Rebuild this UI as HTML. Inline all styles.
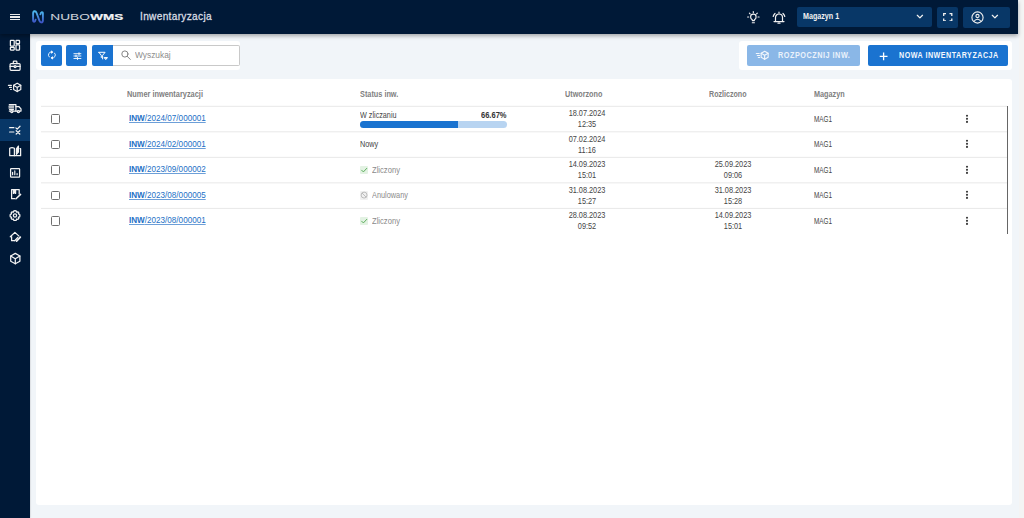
<!DOCTYPE html>
<html><head><meta charset="utf-8">
<style>
*{box-sizing:border-box;margin:0;padding:0}
html,body{width:1024px;height:518px;overflow:hidden}
body{position:relative;background:#f1f5f9;font-family:"Liberation Sans",sans-serif;color:#444}
.a{position:absolute}
#scroll{left:1018.5px;top:0;width:5.5px;height:518px;background:#f4f4f4}
#header{left:0;top:0;width:1018px;height:33.5px;background:#001937;box-shadow:0 1.5px 4px rgba(0,0,0,.32);z-index:3}
#side{left:0;top:34px;width:30px;height:484px;background:#001937;box-shadow:.5px 0 1.5px rgba(0,0,0,.2);z-index:2}
.card{background:#fff;border-radius:3px}
.btn{background:#1a73d0;border-radius:2px}
.t{white-space:nowrap;line-height:1}
.hd{font-size:8px;font-weight:bold;color:#808080;transform-origin:0 0}
.bd{font-size:8px;color:#454545;transform-origin:0 0}
.row{left:40px;width:967px;height:1px;background:#ebebeb}
.cb{left:50.8px;width:9.4px;height:9.8px;border:1.1px solid #6f6f6f;border-radius:1.5px}
.lnk{left:129px;font-size:8.1px;color:#2370c6;text-decoration:underline;text-decoration-color:#6d9fd8;text-decoration-thickness:.8px;text-underline-offset:1px;transform-origin:0 0}
.dots{left:966px;width:2.2px}
.dots i{display:block;width:2.2px;height:2.2px;background:#222;margin-bottom:1px;border-radius:.4px}
.dt{font-size:8px;color:#454545;text-align:center;width:60px;transform-origin:50% 0}
.mag{left:813.8px;font-size:8px;color:#454545;transform-origin:0 0}
</style></head><body>
<div id="scroll" class="a"></div>

<div id="header" class="a">
  <!-- hamburger -->
  <div class="a" style="left:10px;top:13.5px;width:10px;height:1.4px;background:#e8e8e8"></div>
  <div class="a" style="left:10px;top:16.3px;width:10px;height:1.4px;background:#e8e8e8"></div>
  <div class="a" style="left:10px;top:19.1px;width:10px;height:1.4px;background:#e8e8e8"></div>
  <!-- logo -->
  <svg class="a" style="left:29px;top:8px" width="18" height="18" viewBox="0 0 18 18">
    <defs><linearGradient id="lg" x1="0" y1="3" x2="0" y2="15" gradientUnits="userSpaceOnUse"><stop offset="0" stop-color="#4cbcef"/><stop offset="1" stop-color="#3d4fc4"/></linearGradient></defs>
    <path d="M6.6 11.6 C6.1 14.4 4.1 14.3 4.1 12.3 V5.6 C4.1 2.6 6.6 2.4 7.6 5 L10.4 12.6 C11.4 15.2 13.9 15 13.9 12.2 V5.6 C13.9 3.5 11.9 3.5 11.4 6.3" fill="none" stroke="url(#lg)" stroke-width="1.9" stroke-linecap="round" stroke-linejoin="round"/>
  </svg>
  <svg class="a" style="left:49.5px;top:12px" width="75" height="9" viewBox="0 0 75 9">
    <text x="0.3" y="7.75" font-family="Liberation Sans" font-size="8.2" fill="#cdd2d9" stroke="#cdd2d9" stroke-width=".05" textLength="39.5" lengthAdjust="spacingAndGlyphs">NUBO</text>
    <text x="40.2" y="7.75" font-family="Liberation Sans" font-weight="bold" font-size="8.2" fill="#f2f3f5" stroke="#f2f3f5" stroke-width=".2" textLength="33" lengthAdjust="spacingAndGlyphs">WMS</text>
  </svg>
  <div class="a t" style="left:140px;top:11.3px;font-size:11.2px;letter-spacing:.35px;color:#d9dee4;-webkit-text-stroke:.3px #d9dee4;transform:scaleX(.905);transform-origin:0 0">Inwentaryzacja</div>

  <!-- light bulb -->
  <svg class="a" style="left:747px;top:10.5px" width="13" height="13" viewBox="0 0 13 13" fill="none" stroke="#f0f0f0" stroke-width="1.15" stroke-linecap="round" stroke-linejoin="round">
    <path d="M5.3 9.6 V8.7 C4.3 8.1 3.6 7.1 3.6 5.9 a2.75 2.75 0 0 1 5.5 0 c0 1.2 -.7 2.2 -1.7 2.8 V9.6 z"/>
    <path d="M5.3 11.7 h2.1"/>
    <path d="M6.35 .6 v1.1"/><path d="M2.4 2.1 l.7 .7"/><path d="M10.3 2.1 l-.7 .7"/><path d="M.6 6 h1.1"/><path d="M11 6 h1.1"/>
  </svg>
  <!-- alarm bell -->
  <svg class="a" style="left:772px;top:10.5px" width="14" height="13" viewBox="0 0 14 13" fill="none" stroke="#f0f0f0" stroke-width="1.2" stroke-linecap="round">
    <path d="M3.5 10.5 V6.5 a3.5 3.5 0 0 1 7 0 V10.5"/>
    <path d="M2 10.6 h10"/><path d="M6 12.2 h2"/><path d="M7 1 v1"/>
    <path d="M1.2 5.5 a6 6 0 0 1 1.8 -3"/><path d="M12.8 5.5 a6 6 0 0 0 -1.8 -3"/>
  </svg>
  <!-- dropdown -->
  <div class="a" style="left:797px;top:7px;width:135px;height:20.3px;background:#083767;border-radius:2px"></div>
  <div class="a t" style="left:802.8px;top:11.9px;font-size:8.5px;font-weight:bold;color:#f2f2f2;transform:scaleX(.84);transform-origin:0 0">Magazyn 1</div>
  <svg class="a" style="left:916px;top:14.3px" width="8" height="6" viewBox="0 0 8 6"><path d="M1.3 1.3 L3.9 3.9 L6.5 1.3" fill="none" stroke="#f0f0f0" stroke-width="1.25" stroke-linecap="round" stroke-linejoin="round"/></svg>
  <!-- fullscreen -->
  <div class="a" style="left:937px;top:6.5px;width:21px;height:21px;background:#083767;border-radius:2px"></div>
  <svg class="a" style="left:943px;top:12.8px" width="9.5" height="8.5" viewBox="0 0 9.5 8.5" fill="none" stroke="#f0f0f0" stroke-width="1.3">
    <path d="M.7 3 V.7 H3"/><path d="M6.5 .7 H8.8 V3"/><path d="M8.8 5.5 V7.8 H6.5"/><path d="M3 7.8 H.7 V5.5"/>
  </svg>
  <!-- user -->
  <div class="a" style="left:963px;top:6.5px;width:47px;height:21px;background:#083767;border-radius:2px"></div>
  <svg class="a" style="left:971px;top:10.8px" width="13" height="13" viewBox="0 0 13 13" fill="none" stroke="#f0f0f0" stroke-width="1.1">
    <circle cx="6.5" cy="6.5" r="5.6"/><circle cx="6.5" cy="5" r="1.6"/><path d="M3 10.6 c.8 -1.6 2 -2.4 3.5 -2.4 s2.7 .8 3.5 2.4"/>
  </svg>
  <svg class="a" style="left:991.3px;top:14.3px" width="8" height="6" viewBox="0 0 8 6"><path d="M1.3 1.3 L3.9 3.9 L6.5 1.3" fill="none" stroke="#f0f0f0" stroke-width="1.25" stroke-linecap="round" stroke-linejoin="round"/></svg>
</div>

<div id="side" class="a">
  <div class="a" style="left:0;top:85px;width:30px;height:22px;background:#083767"></div>
  <svg class="a" style="left:0;top:0" width="30" height="240" viewBox="0 0 30 240" fill="none" stroke="#f2f2f2" stroke-width="1.25" stroke-linejoin="round" stroke-linecap="round"><g transform="translate(0,-0.5)">
    <!-- dashboard: y 40-50 => local 6.5-16.5 -->
    <rect x="10.4" y="6.9" width="3.8" height="5.6" rx=".4"/>
    <rect x="16" y="6.9" width="3.5" height="3.2" rx=".4"/>
    <rect x="10.4" y="13.9" width="3.8" height="2.6" rx=".4"/>
    <rect x="16" y="11.4" width="3.5" height="5.1" rx=".4"/>
    <!-- briefcase y 61-70.6 => 27.5-37.1 -->
    <rect x="10.1" y="30" width="10" height="6.8" rx="1"/>
    <path d="M13.3 30 V28.5 a.8 .8 0 0 1 .8 -.8 h2 a.8 .8 0 0 1 .8 .8 V30"/>
    <path d="M10.1 32.9 h3.6 M16.5 32.9 h3.6"/>
    <circle cx="15.1" cy="33" r="1"/>
    <!-- fast cube y 82.8-92 => 49.3-58.5 -->
    <path d="M8.4 51.9 h3 M9.5 53.9 h1.9 M10.6 56 h.8" stroke-width="1.1"/>
    <path d="M17.2 49.7 L20.8 51.8 V56 L17.2 58.1 L13.6 56 V51.8 Z" stroke-width="1.15"/>
    <path d="M13.6 51.8 L17.2 53.9 L20.8 51.8 M17.2 53.9 V58.1" stroke-width="1.15"/>
    <!-- truck y 103.7-112.6 => 70.2-79.1 -->
    <path d="M9.3 71 h6.6 v6.6 h-6.6"/>
    <path d="M9 72.7 h4.6 M9 74.4 h4.6 M9.5 76 h4"/>
    <path d="M15.9 73 h2.9 l2.2 2.4 v2.2 h-5.1"/>
    <circle cx="11.8" cy="78.1" r="1.1" fill="#001937"/>
    <circle cx="18.4" cy="78.1" r="1.1" fill="#001937"/>
    <!-- list check y 126-134 => 92.5-100.5 -->
    <path d="M9.6 94.2 h4.3 M9.6 98.5 h4.3" stroke-width="1.2"/>
    <path d="M15.9 94.4 l1.3 1.2 l2.8 -2.9"/>
    <path d="M16.2 97.2 l3.6 3.3 M19.8 97.2 l-3.6 3.3"/>
    <!-- book y 145.5-156 => 112-122.5 -->
    <path d="M9.7 122.2 V114.8 Q12 113.6 14.4 114.8 V122.2 Z"/>
    <path d="M14.4 122.2 H20.6 V115.2 H20"/>
    <path d="M16.4 120.8 V115.4 L18.4 112.6 V118.6 Z" fill="#f2f2f2"/>
    <!-- chart y 168.2-177.4 => 134.7-143.9 -->
    <rect x="10.6" y="135.1" width="9" height="8.6" rx=".6"/>
    <path d="M12.6 141.2 v-2.4 M14.8 141.2 v-3.8 M17.1 141.2 v-1.2" stroke-width="1.2"/>
    <!-- doc pen y 189-199 => 155.5-165.5 -->
    <path d="M19.2 160.6 V156 H11.6 V165.2 H14.8"/>
    <path d="M13.4 156 V159.9 L14.5 159 L15.6 159.9 V156 Z" fill="#f2f2f2"/>
    <path d="M16 165.2 L20.6 160.9" stroke-width="1.5"/>
    <!-- gear y 210.4-220.6 => 176.9-187.1 -->
    <path d="M15 177.2 l1.2 .2 .4 1.3 1.3 -.4 .9 .9 -.4 1.3 1.3 .4 .2 1.2 -.2 1.2 -1.3 .4 .4 1.3 -.9 .9 -1.3 -.4 -.4 1.3 -1.2 .2 -1.2 -.2 -.4 -1.3 -1.3 .4 -.9 -.9 .4 -1.3 -1.3 -.4 -.2 -1.2 .2 -1.2 1.3 -.4 -.4 -1.3 .9 -.9 1.3 .4 .4 -1.3 z"/>
    <circle cx="15" cy="182" r="1.6"/>
    <!-- tag home y 232-241.6 => 198.5-208.1 -->
    <path d="M10.3 203.3 L14.9 198.9 L19 202.6"/>
    <path d="M11.6 203.2 V207.2 H14.7"/>
    <path d="M20.4 203.6 L16.6 207.6" stroke-width="1.6"/>
    <path d="M14.7 207.2 L17.8 204"/>
    <!-- cube y 253-263.8 => 219.5-230.3 -->
    <path d="M15.3 219.9 l4.6 2.6 v5.2 l-4.6 2.6 l-4.6 -2.6 v-5.2 z"/>
    <path d="M10.7 222.5 l4.6 2.7 l4.6 -2.7 M15.3 225.2 v5.1"/>
  </g></svg>
</div>

<!-- left toolbar -->
<div class="a card" style="left:36px;top:41px;width:204px;height:29px"></div>
<div class="a btn" style="left:41px;top:45px;width:21px;height:21px"></div>
<div class="a btn" style="left:66px;top:45px;width:21px;height:21px"></div>
<div class="a btn" style="left:92px;top:45px;width:22px;height:21px;border-radius:2px 0 0 2px"></div>
<div class="a" style="left:113px;top:45px;width:127px;height:21px;border:1px solid #c9c9c9;border-left:none;border-radius:0 2px 2px 0;background:#fff"></div>
<div class="a t" style="left:134.6px;top:50.6px;font-size:8.8px;color:#8c8c8c;transform:scaleX(.95);transform-origin:0 0">Wyszukaj</div>

<!-- toolbar icons -->
<svg class="a" style="left:46.5px;top:50.4px" width="10" height="10" viewBox="0 0 10 10" fill="none" stroke="#fff" stroke-width=".9" stroke-linecap="round" stroke-linejoin="round">
  <path d="M2.3 7 A2.9 2.9 0 0 1 5 2.1"/><path d="M7.6 3.1 A2.9 2.9 0 0 1 4.9 7.9"/>
  <path d="M4.7 1.2 L5.8 2.1 L4.7 3 z" fill="#fff"/><path d="M5.2 7 L4.1 7.9 L5.2 8.8 z" fill="#fff"/>
</svg>
<svg class="a" style="left:72.5px;top:51.5px" width="9" height="8" viewBox="0 0 9 8" fill="none" stroke="#fff" stroke-width=".9">
  <path d="M.5 1.7 h7.8 M.5 4 h7.8 M.5 6.5 h7.8"/><path d="M6 .4 v2.6 M3 2.7 v2.6 M4.5 5.2 v2.6" stroke-width="1"/>
</svg>
<svg class="a" style="left:97.5px;top:50.5px" width="10" height="9" viewBox="0 0 10 9" fill="none" stroke="#fff" stroke-width="1" stroke-linejoin="round" stroke-linecap="round">
  <path d="M.8 1.3 h6.3 l-2.5 3 v3.6 M.8 1.3 l2.5 3 v2.2"/>
  <path d="M6.5 6.6 h3 l-1.5 1.7 z" fill="#fff"/>
</svg>
<svg class="a" style="left:120.5px;top:50px" width="10.5" height="10.5" viewBox="0 0 10.5 10.5" fill="none" stroke="#858585" stroke-width="1" stroke-linecap="round">
  <circle cx="3.9" cy="4" r="3.1"/><path d="M6.2 6.3 L9.3 9.4"/>
</svg>
<!-- right toolbar -->
<div class="a card" style="left:739px;top:41px;width:273px;height:29px"></div>
<div class="a btn" style="left:747px;top:45px;width:113px;height:21px;background:#8ab7e7"></div>
<div class="a btn" style="left:868px;top:45px;width:140px;height:21px"></div>
<div class="a t" style="left:778px;top:51.2px;font-size:8.3px;font-weight:bold;color:#eaf2fb;letter-spacing:.6px;transform:scaleX(.875);transform-origin:0 0">ROZPOCZNIJ INW.</div>
<div class="a t" style="left:898.8px;top:51.1px;font-size:8.3px;font-weight:bold;color:#f4f8fd;letter-spacing:.6px;transform:scaleX(.858);transform-origin:0 0">NOWA INWENTARYZACJA</div>

<svg class="a" style="left:755px;top:50px" width="15" height="12" viewBox="0 0 15 12" fill="none" stroke="#f3f7fc" stroke-width="1.1" stroke-linecap="round" stroke-linejoin="round">
  <path d="M1.3 3.5 h2.9 M2.3 5.5 h2.3 M3.3 7.5 h1.4"/>
  <path d="M9.65 1.35 L13.15 3.35 V7.35 L9.65 9.35 L6.15 7.35 V3.35 Z"/><path d="M6.15 3.35 L9.65 5.35 L13.15 3.35 M9.65 5.35 V9.35"/>
</svg>
<svg class="a" style="left:878.5px;top:51.5px" width="9.5" height="9" viewBox="0 0 9.5 9" fill="none" stroke="#fff" stroke-width="1.3">
  <path d="M4.6 .6 v7.6 M.7 4.4 h7.8"/>
</svg>
<!-- table card -->
<div class="a card" style="left:36px;top:79px;width:976px;height:426px"></div>
<!-- TABLE START -->
<div class="a t hd" style="left:126.8px;top:90.50px;font-size:8.2px;transform:scaleX(0.902)">Numer inwentaryzacji</div>
<div class="a t hd" style="left:359.6px;top:90.50px;font-size:8.2px;transform:scaleX(0.893)">Status inw.</div>
<div class="a t hd" style="left:564.7px;top:90.50px;font-size:8.2px;transform:scaleX(0.883)">Utworzono</div>
<div class="a t hd" style="left:709.4px;top:90.50px;font-size:8.2px;transform:scaleX(0.868)">Rozliczono</div>
<div class="a t hd" style="left:813.8px;top:90.50px;font-size:8.2px;transform:scaleX(0.888)">Magazyn</div>
<svg class="a" style="left:40px;top:0" width="967" height="240"><rect x="1" y="105.80" width="966" height="1" fill="#e8e8e8"/></svg>
<div class="a cb" style="top:114.10px"></div>
<div class="a t lnk" style="top:114.24px;font-size:8.6px;transform:scaleX(0.944)"><b>INW</b>/2024/07/000001</div>
<div class="a t bd" style="left:359.7px;top:111.07px;font-size:8.4px;transform:scaleX(0.862)">W zliczaniu</div>
<div class="a t bd" style="left:480.7px;top:110.72px;font-size:8.7px;font-weight:bold;color:#333;transform:scaleX(.865)">66.67%</div>
<div class="a" style="left:359.5px;top:121px;width:147.5px;height:7px;border-radius:3.5px;background:#b8d4f1;overflow:hidden"><div style="width:98.3px;height:100%;background:#1a73d0"></div></div>
<div class="a t dt" style="left:557.3px;top:109.08px;font-size:8.4px;transform:scaleX(0.876)">18.07.2024</div>
<div class="a t dt" style="left:557.3px;top:120.28px;font-size:8.4px;transform:scaleX(0.876)">12:35</div>
<div class="a t mag" style="top:114.68px;font-size:8.4px;transform:scaleX(0.762)">MAG1</div>
<svg class="a" style="left:964px;top:112.90px" width="6" height="12" viewBox="0 0 6 12" fill="#3a3a3a"><circle cx="3" cy="2.8" r="1.05"/><circle cx="3" cy="5.85" r="1.05"/><circle cx="3" cy="8.9" r="1.05"/></svg>
<svg class="a" style="left:40px;top:0" width="967" height="240"><rect x="1" y="131.32" width="966" height="1" fill="#e8e8e8"/></svg>
<div class="a cb" style="top:139.62px"></div>
<div class="a t lnk" style="top:139.76px;font-size:8.6px;transform:scaleX(0.944)"><b>INW</b>/2024/02/000001</div>
<div class="a t bd" style="left:359.7px;top:140.20px;font-size:8.4px;transform:scaleX(0.871)">Nowy</div>
<div class="a t dt" style="left:557.3px;top:134.60px;font-size:8.4px;transform:scaleX(0.876)">07.02.2024</div>
<div class="a t dt" style="left:557.3px;top:145.80px;font-size:8.4px;transform:scaleX(0.876)">11:16</div>
<div class="a t mag" style="top:140.20px;font-size:8.4px;transform:scaleX(0.762)">MAG1</div>
<svg class="a" style="left:964px;top:138.42px" width="6" height="12" viewBox="0 0 6 12" fill="#3a3a3a"><circle cx="3" cy="2.8" r="1.05"/><circle cx="3" cy="5.85" r="1.05"/><circle cx="3" cy="8.9" r="1.05"/></svg>
<svg class="a" style="left:40px;top:0" width="967" height="240"><rect x="1" y="156.84" width="966" height="1" fill="#e8e8e8"/></svg>
<div class="a cb" style="top:165.14px"></div>
<div class="a t lnk" style="top:165.28px;font-size:8.6px;transform:scaleX(0.944)"><b>INW</b>/2023/09/000002</div>
<div class="a" style="left:359.7px;top:165.94px;width:8.2px;height:8.2px;background:#e3f2e3;border-radius:1px"></div>
<svg class="a" style="left:359.7px;top:165.94px" width="8.2" height="8.2" viewBox="0 0 8 8"><path d="M1.6 4.1 L3.3 5.8 L6.6 2.3" fill="none" stroke="#52a852" stroke-width="0.9" stroke-linecap="round"/></svg>
<div class="a t bd" style="left:372px;top:165.72px;font-size:8.4px;color:#8a8a8a;transform:scaleX(0.910)">Zliczony</div>
<div class="a t dt" style="left:557.3px;top:160.12px;font-size:8.4px;transform:scaleX(0.876)">14.09.2023</div>
<div class="a t dt" style="left:557.3px;top:171.32px;font-size:8.4px;transform:scaleX(0.876)">15:01</div>
<div class="a t dt" style="left:702.5px;top:160.12px;font-size:8.4px;transform:scaleX(0.876)">25.09.2023</div>
<div class="a t dt" style="left:702.5px;top:171.32px;font-size:8.4px;transform:scaleX(0.876)">09:06</div>
<div class="a t mag" style="top:165.72px;font-size:8.4px;transform:scaleX(0.762)">MAG1</div>
<svg class="a" style="left:964px;top:163.94px" width="6" height="12" viewBox="0 0 6 12" fill="#3a3a3a"><circle cx="3" cy="2.8" r="1.05"/><circle cx="3" cy="5.85" r="1.05"/><circle cx="3" cy="8.9" r="1.05"/></svg>
<svg class="a" style="left:40px;top:0" width="967" height="240"><rect x="1" y="182.36" width="966" height="1" fill="#e8e8e8"/></svg>
<div class="a cb" style="top:190.66px"></div>
<div class="a t lnk" style="top:190.80px;font-size:8.6px;transform:scaleX(0.944)"><b>INW</b>/2023/08/000005</div>
<div class="a" style="left:359.7px;top:191.46px;width:8.2px;height:8.2px;background:#f0f0f0;border-radius:1px"></div>
<svg class="a" style="left:359.7px;top:191.46px" width="8.2" height="8.2" viewBox="0 0 8 8"><circle cx="4" cy="4" r="2.9" fill="none" stroke="#b0b0b0" stroke-width="0.8"/><path d="M2 2 L6 6" stroke="#b0b0b0" stroke-width="0.8"/></svg>
<div class="a t bd" style="left:372px;top:191.24px;font-size:8.4px;color:#8a8a8a;transform:scaleX(0.876)">Anulowany</div>
<div class="a t dt" style="left:557.3px;top:185.64px;font-size:8.4px;transform:scaleX(0.876)">31.08.2023</div>
<div class="a t dt" style="left:557.3px;top:196.84px;font-size:8.4px;transform:scaleX(0.876)">15:27</div>
<div class="a t dt" style="left:702.5px;top:185.64px;font-size:8.4px;transform:scaleX(0.876)">31.08.2023</div>
<div class="a t dt" style="left:702.5px;top:196.84px;font-size:8.4px;transform:scaleX(0.876)">15:28</div>
<div class="a t mag" style="top:191.24px;font-size:8.4px;transform:scaleX(0.762)">MAG1</div>
<svg class="a" style="left:964px;top:189.46px" width="6" height="12" viewBox="0 0 6 12" fill="#3a3a3a"><circle cx="3" cy="2.8" r="1.05"/><circle cx="3" cy="5.85" r="1.05"/><circle cx="3" cy="8.9" r="1.05"/></svg>
<svg class="a" style="left:40px;top:0" width="967" height="240"><rect x="1" y="207.88" width="966" height="1" fill="#e8e8e8"/></svg>
<div class="a cb" style="top:216.18px"></div>
<div class="a t lnk" style="top:216.32px;font-size:8.6px;transform:scaleX(0.944)"><b>INW</b>/2023/08/000001</div>
<div class="a" style="left:359.7px;top:216.98px;width:8.2px;height:8.2px;background:#e3f2e3;border-radius:1px"></div>
<svg class="a" style="left:359.7px;top:216.98px" width="8.2" height="8.2" viewBox="0 0 8 8"><path d="M1.6 4.1 L3.3 5.8 L6.6 2.3" fill="none" stroke="#52a852" stroke-width="0.9" stroke-linecap="round"/></svg>
<div class="a t bd" style="left:372px;top:216.76px;font-size:8.4px;color:#8a8a8a;transform:scaleX(0.910)">Zliczony</div>
<div class="a t dt" style="left:557.3px;top:211.16px;font-size:8.4px;transform:scaleX(0.876)">28.08.2023</div>
<div class="a t dt" style="left:557.3px;top:222.36px;font-size:8.4px;transform:scaleX(0.876)">09:52</div>
<div class="a t dt" style="left:702.5px;top:211.16px;font-size:8.4px;transform:scaleX(0.876)">14.09.2023</div>
<div class="a t dt" style="left:702.5px;top:222.36px;font-size:8.4px;transform:scaleX(0.876)">15:01</div>
<div class="a t mag" style="top:216.76px;font-size:8.4px;transform:scaleX(0.762)">MAG1</div>
<svg class="a" style="left:964px;top:214.98px" width="6" height="12" viewBox="0 0 6 12" fill="#3a3a3a"><circle cx="3" cy="2.8" r="1.05"/><circle cx="3" cy="5.85" r="1.05"/><circle cx="3" cy="8.9" r="1.05"/></svg>
<div class="a" style="left:1007px;top:106px;width:1px;height:128px;background:#666"></div>
<!-- TABLE END -->
</body></html>
